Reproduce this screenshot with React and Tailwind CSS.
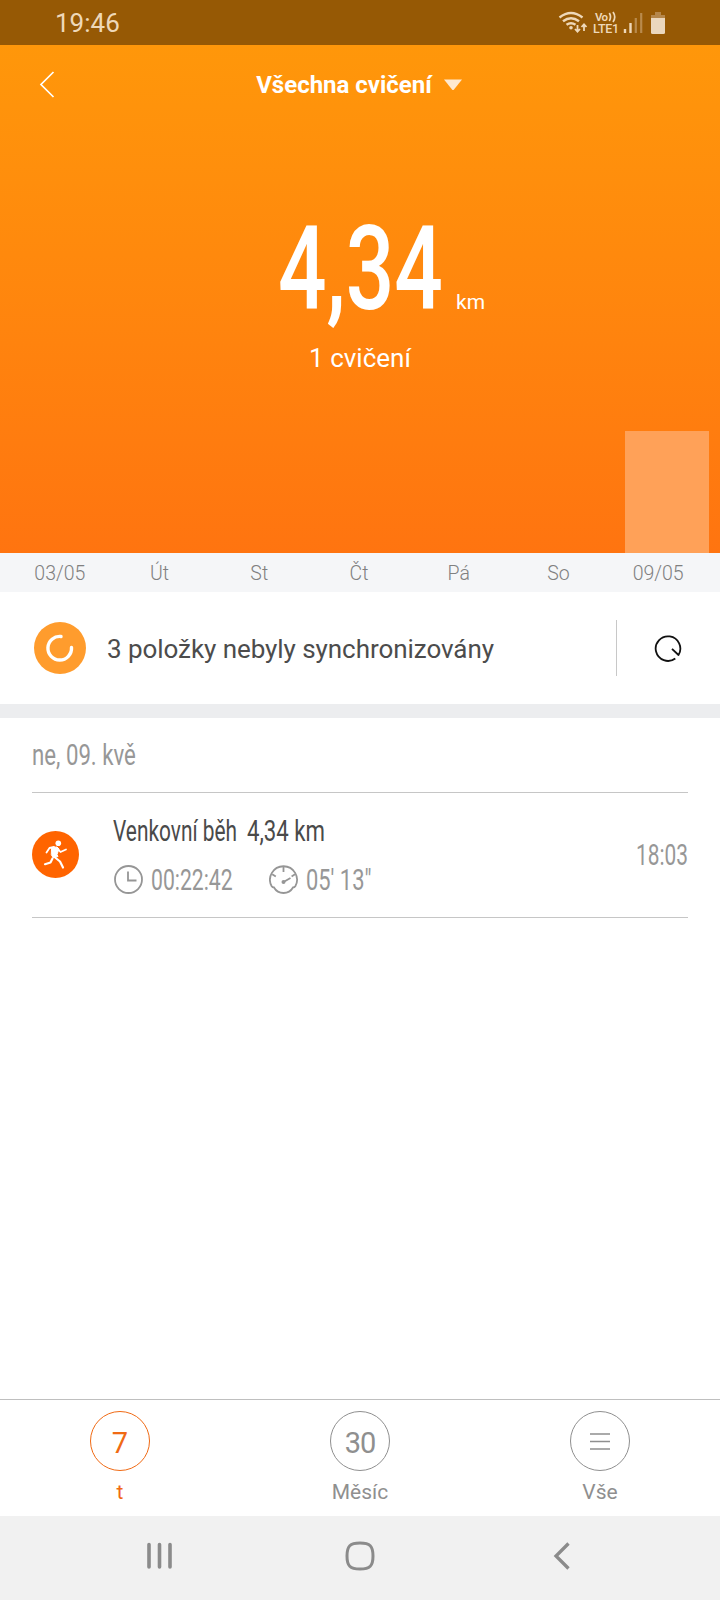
import React from 'react';

const days = ['03/05', 'Út', 'St', 'Čt', 'Pá', 'So', '09/05'];

// Condensed text: the box takes the final width, the inner span is squeezed into it
function Narrow({ box, text, children }) {
  return (
    <span className={`block shrink-0 whitespace-nowrap ${box}`}>
      <span className={`inline-block origin-left ${text}`}>{children}</span>
    </span>
  );
}

function StatusBar() {
  return (
    <div className="flex h-[45px] items-center justify-between bg-[#965905] pl-[55px] pr-[54px] text-[#eed8b9]">
      <span className="text-[26px] leading-none">19:46</span>
      <svg width="110" height="30" viewBox="556 8 110 30" fill="none">
        <g stroke="#eed8b9" strokeWidth="2.4">
          <path d="M559.5 17.500 Q571 8.500 582.500 17.500" />
          <path d="M563 21.300 Q571 15 579 21.300" />
          <path d="M566.500 24.800 Q571 21.500 575.500 24.800" />
        </g>
        <circle cx="571" cy="27.800" r="1.800" fill="#eed8b9" />
        <path d="M577.500 25V31.500M575 29l2.500 2.700 2.500-2.700M584 31V24.500M581.500 27l2.500-2.700 2.500 2.700" stroke="#eed8b9" strokeWidth="1.800" />
        <text x="595" y="20.800" fontSize="11.500" fontWeight="600" fill="#eed8b9" textLength="13">Vo</text>
        <path d="M609.300 13q2.400 4 0 8M613 12q3.500 5 0 10" stroke="#eed8b9" strokeWidth="1.700" />
        <text x="593" y="33" fontSize="12.500" fontWeight="500" fill="#eed8b9" textLength="26">LTE1</text>
        <path d="M625 29v4M630.500 23v10" stroke="#eed8b9" strokeWidth="2.400" />
        <path d="M635.800 18v15M641.200 13v20" stroke="#b98a4c" strokeWidth="2.200" />
        <path d="M655 12h6v3h4v3h-14v-3h4z" fill="#b5864a" />
        <path d="M651 18h14v14.500q0 1.500-1.500 1.500h-11q-1.500 0-1.500-1.500z" fill="#ebd7bd" />
      </svg>
    </div>
  );
}

function Summary() {
  return (
    <section className="relative h-[508px] bg-gradient-to-b from-[#ff970a] to-[#ff7410] text-white">
      <div className="flex h-[80px] items-center justify-center pr-px">
        <svg className="absolute left-[38px] top-[25px]" width="18" height="30" viewBox="0 0 18 30" fill="none" stroke="#fff" strokeWidth="1.7">
          <path d="M15.500 2L3 14.500 15.500 27" />
        </svg>
        <h1 className="text-[24px] font-bold leading-none">Všechna cvičení</h1>
        <svg className="ml-[11px]" width="20" height="12" viewBox="0 0 20 12">
          <path d="M1 .5h18L11 10.500q-1 1-2 0z" fill="#ffe9cf" />
        </svg>
      </div>
      <div className="flex items-baseline pl-[278px] pt-[91px]">
        <Narrow box="w-[178px] text-[117px] leading-[106px] font-medium" text="scale-x-[0.73]">4,34</Narrow>
        <span className="text-[21px]">km</span>
      </div>
      <p className="mt-[18px] text-center text-[26px] leading-[36px]">1 cvičení</p>
      <div className="absolute bottom-0 right-[11px] h-[122px] w-[84px] bg-[#ffa158]" />
    </section>
  );
}

function ClockIcon() {
  return (
    <svg width="30" height="30" viewBox="0 0 30 30" fill="none" stroke="#969696" strokeWidth="1.800">
      <circle cx="14.500" cy="14.500" r="13.500" />
      <path d="M14 6.500v9h8.500" />
    </svg>
  );
}

function PaceIcon() {
  return (
    <svg width="30" height="30" viewBox="0 0 30 30" fill="none" stroke="#969696" strokeWidth="1.800">
      <path d="M5 22.500Q3.500 22.500 2.700 21.300A13.500 13.500 0 1 1 26.300 21.300Q25.500 22.500 24 22.500C22 26 18.500 28 14.500 28S7 26 5 22.500z" />
      <path d="M14.500 1.500v5.500M3.200 9.200l3.600 2.300M26 9.200l-3.400 2.200M21.500 13L14.500 17" />
      <circle cx="14.500" cy="17" r="2" fill="#969696" stroke="none" />
    </svg>
  );
}

function RunnerIcon() {
  return (
    <svg className="mb-[2px]" width="47" height="47" viewBox="0 0 47 47" fill="none">
      <circle cx="23.500" cy="23.500" r="23.500" fill="#ff6400" />
      <g stroke="#fff" strokeLinecap="round" strokeLinejoin="round">
        <path d="M20 16.500l5-.5 2 2-2 5.500 1 2-5 1-1.500-2.500z" fill="#fff" strokeWidth="1" />
        <path d="M22 16L17.500 17l-3 4.500M25.500 17.500l3 3.500 5.500-2.500" strokeWidth="1.800" />
        <path d="M22.500 26l5.500 4.500 3 6M20.500 27.500L18.500 31.500 13 33.200" strokeWidth="2.200" />
      </g>
      <circle cx="26.300" cy="12.300" r="2.800" fill="#fff" />
    </svg>
  );
}

function SyncRow() {
  return (
    <section className="flex h-[112px] items-center pl-[34px]">
      <svg width="52" height="52" viewBox="0 0 52 52" fill="none">
        <circle cx="26" cy="26" r="26" fill="#ff9c2d" />
        <path d="M27 14.500A11.800 11.800 0 1 0 37.500 25.500" stroke="#fff" strokeWidth="3.400" strokeLinecap="round" />
      </svg>
      <p className="ml-[21px] mt-[2px] text-[26px] leading-none tracking-[-0.06px] text-[#4c4c4c]">3 položky nebyly synchronizovány</p>
      <div className="ml-auto h-[56px] w-px bg-[#c8c8c8]" />
      <svg className="ml-[36px] mr-[37px]" width="30" height="30" viewBox="0 0 30 30" fill="none" stroke="#111" strokeWidth="1.800">
        <path d="M22.300 25.500A12.300 12.300 0 1 1 25.500 22L19 15.800" strokeLinejoin="round" />
      </svg>
    </section>
  );
}

function Workouts() {
  return (
    <section className="flex-1 px-8 text-[29px] leading-[34px] text-[#979797]">
      <div className="flex h-[75px] items-center border-b border-[#c6c6c6]">
        <Narrow box="w-[110px] text-[30px]" text="scale-x-[0.74]">ne, 09. kvě</Narrow>
      </div>
      <div className="flex h-[125px] items-center border-b border-[#c6c6c6]">
        <RunnerIcon />
        <div className="ml-[35px] flex-1">
          <div className="flex text-[#4a4a4a]">
            <Narrow box="-ml-px w-[134px]" text="scale-x-[0.72]">Venkovní běh</Narrow>
            <Narrow box="w-[80px]" text="scale-x-[0.765]">4,34 km</Narrow>
          </div>
          <div className="mt-[15px] flex items-center">
            <ClockIcon />
            <Narrow box="ml-[7px] w-[118px]" text="scale-x-[0.73]">00:22:42</Narrow>
            <PaceIcon />
            <Narrow box="ml-[7px] w-[80px]" text="scale-x-[0.755]">05′ 13″</Narrow>
          </div>
        </div>
        <Narrow box="w-[52px]" text="scale-x-[0.72]">18:03</Narrow>
      </div>
    </section>
  );
}

function TabItem({ label, active, children }) {
  return (
    <div className={`flex w-[240px] flex-col items-center ${active ? 'text-[#f06a14]' : 'text-[#8f8f8f]'}`}>
      <div className="flex h-[60px] w-[60px] items-center justify-center rounded-full border border-current text-[29px] tracking-[-1px]">
        {children}
      </div>
      <span className="mt-[9px] text-[21px] leading-6">{label}</span>
    </div>
  );
}

function App() {
  return (
    <div className="flex h-[1600px] w-[720px] flex-col bg-white font-['Roboto',sans-serif]">
      <StatusBar />
      <Summary />
      <div className="grid h-[39px] grid-cols-7 items-center bg-[#f5f6f8] pl-[10px] pr-[12px] pt-[2px] text-center text-[19.500px] font-light leading-none text-[#808080]">
        {days.map((day) => (
          <span key={day}>{day}</span>
        ))}
      </div>
      <SyncRow />
      <div className="h-[14px] bg-[#ecedef]" />
      <Workouts />
      <div className="flex h-[117px] border-t border-[#bfbfbf] pt-[11px]">
        <TabItem label="t" active>
          <span className="pr-px pt-[5px]">7</span>
        </TabItem>
        <TabItem label="Měsíc">
          <span className="pt-[5px]">30</span>
        </TabItem>
        <TabItem label="Vše">
          <svg width="20" height="19" viewBox="0 0 20 19" fill="none" stroke="currentColor" strokeWidth="1.500">
            <path d="M0 2h20M0 9.500h20M0 17h20" />
          </svg>
        </TabItem>
      </div>
      <nav className="flex h-[84px] items-center bg-[#f1f1f1] pb-[4px] text-[#8b8b8b]">
        <svg className="ml-[146px]" width="28" height="28" viewBox="0 0 28 28" fill="none" stroke="currentColor" strokeWidth="3.600" strokeLinecap="round">
          <path d="M3 2.500v22.500M13.500 2.500v22.500M24 2.500v22.500" />
        </svg>
        <svg className="ml-[171px]" width="30" height="30" viewBox="0 0 30 30" fill="none" stroke="currentColor" strokeWidth="3">
          <path d="M15 2C25 2 28 5 28 15S25 28 15 28 2 25 2 15 5 2 15 2z" />
        </svg>
        <svg className="ml-[178px]" width="18" height="30" viewBox="0 0 18 30" fill="none" stroke="currentColor" strokeWidth="3.300">
          <path d="M15.500 2.500L3 15l12.500 12.500" />
        </svg>
      </nav>
    </div>
  );
}

export default App;
